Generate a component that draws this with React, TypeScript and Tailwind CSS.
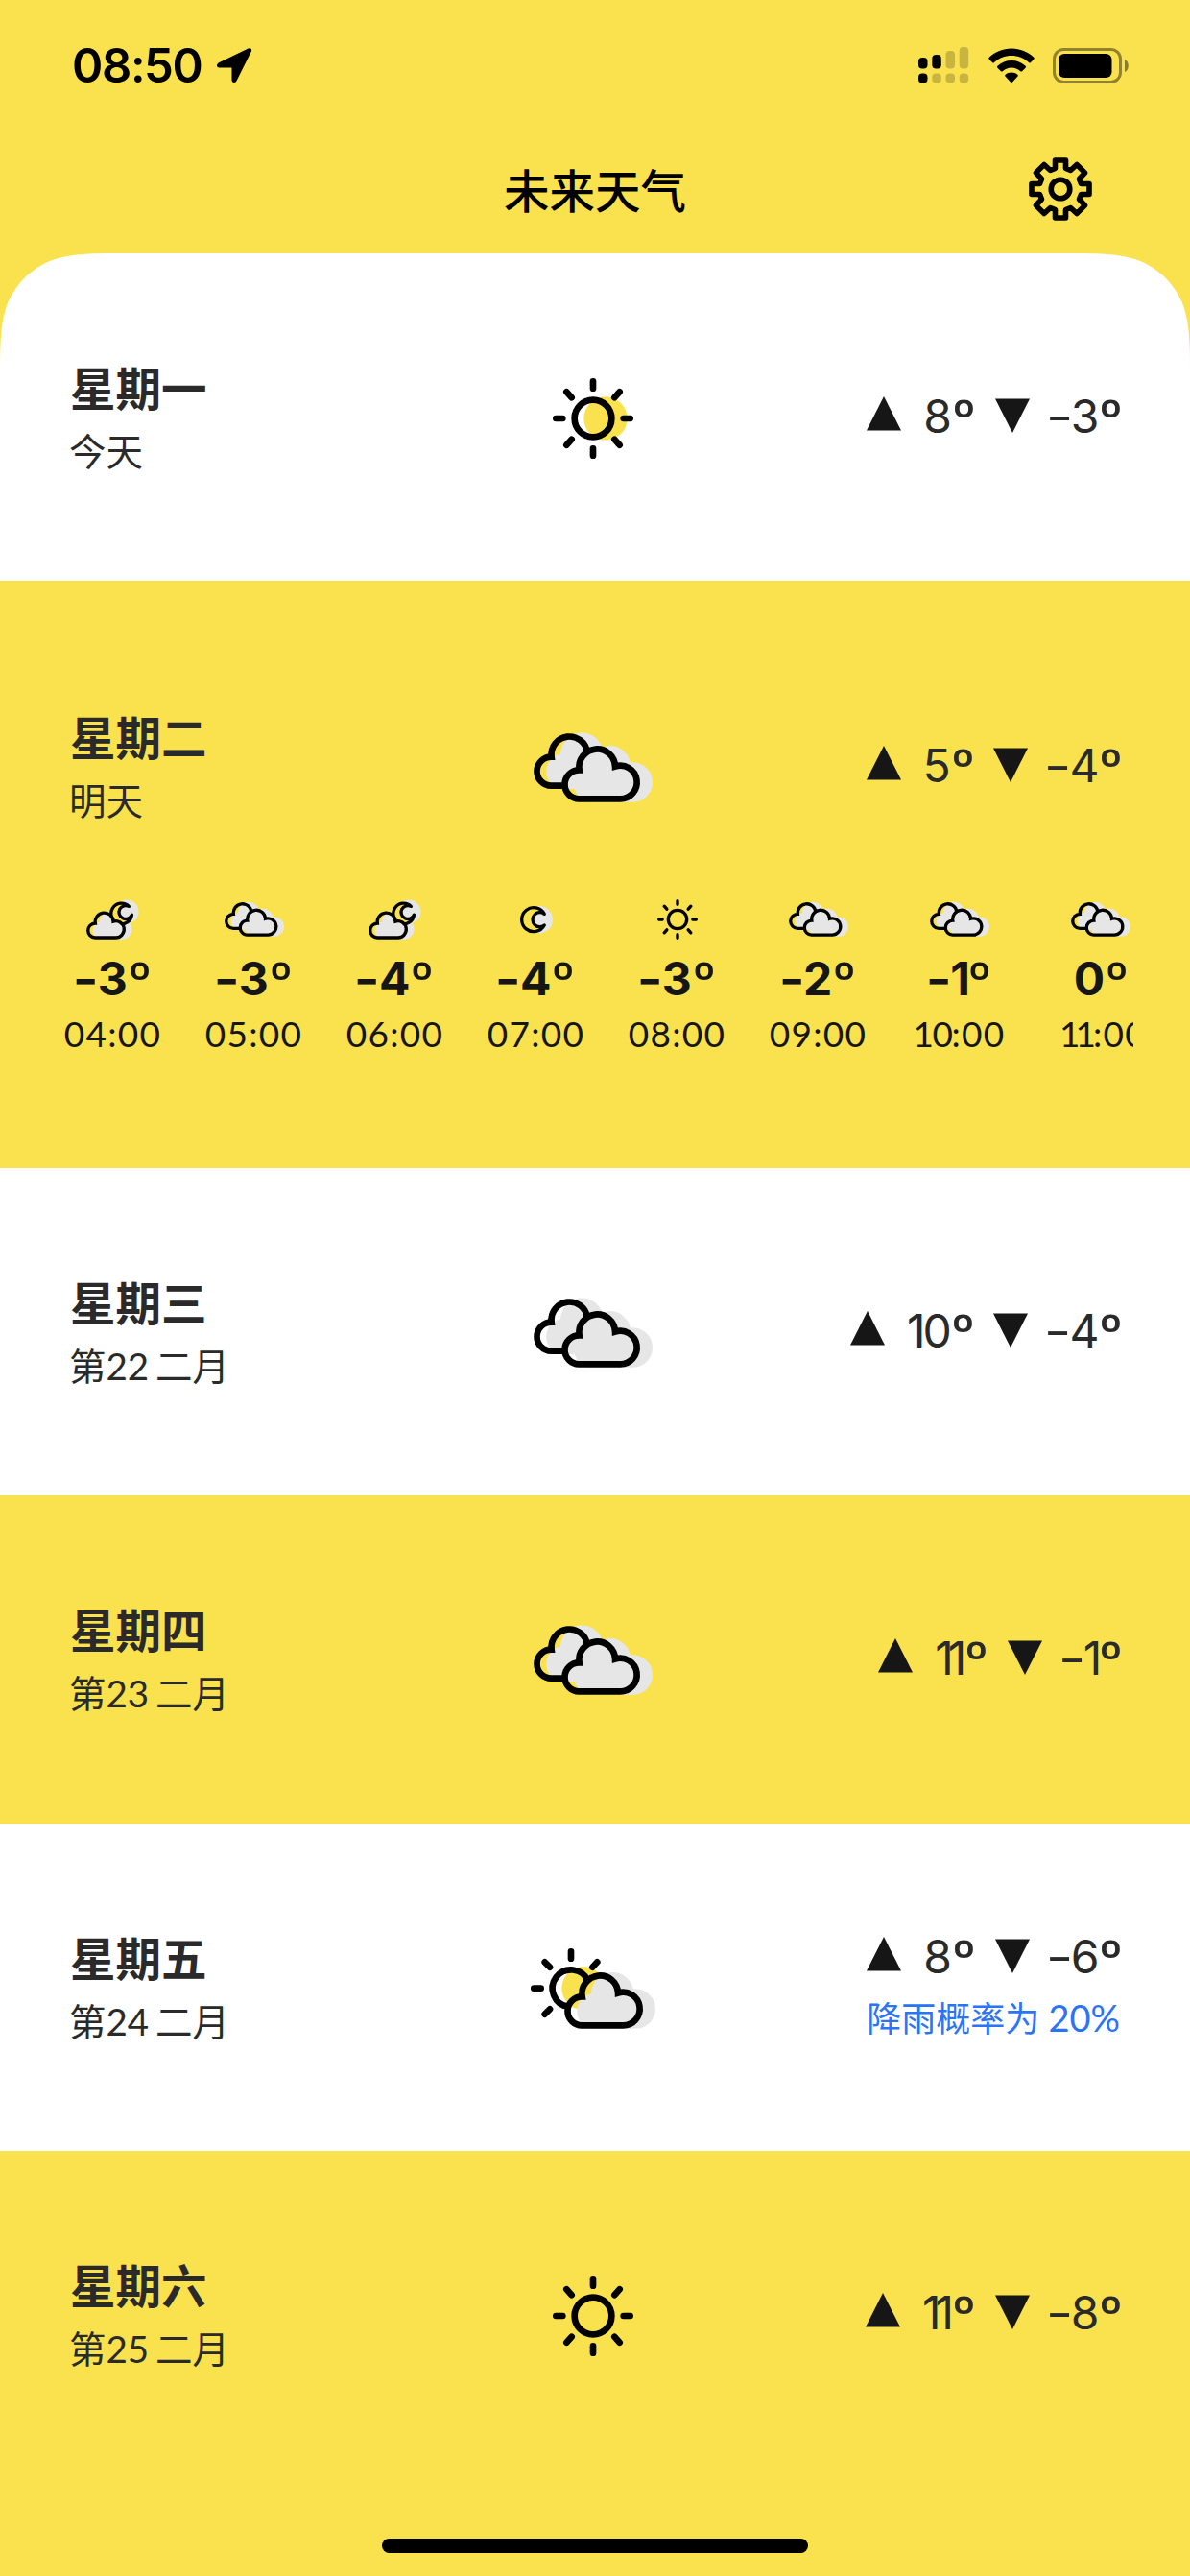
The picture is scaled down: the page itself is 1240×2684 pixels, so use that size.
import { clsx } from "clsx";

type IconName = "sun" | "sunFilled" | "clouds" | "sunCloud" | "moon" | "cloudMoon";

type Day = {
  name: string;
  date: string;
  icon: IconName;
  high: string;
  low: string;
  rain?: string;
  hours?: { icon: IconName; temp: string; time: string }[];
};

const days: Day[] = [
  { name: "星期一", date: "今天", icon: "sunFilled", high: "8", low: "-3" },
  {
    name: "星期二",
    date: "明天",
    icon: "clouds",
    high: "5",
    low: "-4",
    hours: [
      { icon: "cloudMoon", temp: "-3", time: "04:00" },
      { icon: "clouds", temp: "-3", time: "05:00" },
      { icon: "cloudMoon", temp: "-4", time: "06:00" },
      { icon: "moon", temp: "-4", time: "07:00" },
      { icon: "sun", temp: "-3", time: "08:00" },
      { icon: "clouds", temp: "-2", time: "09:00" },
      { icon: "clouds", temp: "-1", time: "10:00" },
      { icon: "clouds", temp: "0", time: "11:00" },
    ],
  },
  { name: "星期三", date: "第22 二月", icon: "clouds", high: "10", low: "-4" },
  { name: "星期四", date: "第23 二月", icon: "clouds", high: "11", low: "-1" },
  { name: "星期五", date: "第24 二月", icon: "sunCloud", high: "8", low: "-6", rain: "20%" },
  { name: "星期六", date: "第25 二月", icon: "sun", high: "11", low: "-8" },
];

const CLOUD = "M55 164A45 45 0 0 1 56 74A56.4 56.4 0 1 1 168 62.5A52 52 0 1 1 183 164Z";
const CLOUD_BEHIND = "M97 164H55A45 45 0 0 1 56 74A56.4 56.4 0 1 1 168 60";
const YELLOW = "#fae24e";
const GRAY = "#e6e6e6";

function CloudShadow() {
  return <path d={CLOUD} transform="translate(39 0)" fill={GRAY} stroke={GRAY} strokeWidth="20" />;
}

function Sun({ filled }: { filled?: boolean }) {
  return (
    <>
      {filled && <circle cx="165" cy="126" r="68" fill={YELLOW} stroke="none" />}
      <circle cx="126" cy="126" r="58" />
      <path
        strokeLinecap="round"
        d="M126 10V32M126 220V242M10 126H31M221 126H242M43 43L59 61M209 43L193 61M43 209L59 191M209 209L193 191"
      />
    </>
  );
}

function Clouds() {
  return (
    <>
      <CloudShadow />
      <g transform="translate(87 41)">
        <CloudShadow />
      </g>
      <path d={CLOUD_BEHIND} />
      <path d={CLOUD} transform="translate(87 41)" />
    </>
  );
}

function SunCloud() {
  return (
    <>
      <circle cx="165" cy="125" r="68" fill={YELLOW} stroke="none" />
      <g transform="translate(105 77)">
        <CloudShadow />
      </g>
      <path d="M117.4 182.4A58 58 0 1 1 179 101.4" />
      <path strokeLinecap="round" d="M126 10V32M10 125H32M44 43L60 59M208 43L193 59M60 190L44 206" />
      <path d={CLOUD} transform="translate(105 77)" />
    </>
  );
}

function Moon() {
  return (
    <>
      <circle cx="119" cy="85" r="85" fill={GRAY} stroke="none" />
      <path
        d="M151.4 50A75 75 0 1 0 151.4 120A45 45 0 1 1 151.4 50Z"
        fill={YELLOW}
        strokeLinejoin="round"
      />
    </>
  );
}

function CloudMoon() {
  return (
    <>
      <clipPath id="cloud-inside">
        <path d={CLOUD} />
      </clipPath>
      <circle cx="252" cy="78" r="75" fill={GRAY} stroke="none" />
      <g transform="translate(0 76)">
        <CloudShadow />
      </g>
      <path
        d="M266 44A65 65 0 1 0 284.5 97.6A42 42 0 1 1 266 44Z"
        fill={YELLOW}
        strokeLinejoin="round"
      />
      <g transform="translate(0 76)">
        <path d={CLOUD} fill={YELLOW} stroke="none" />
        <g clipPath="url(#cloud-inside)">
          <CloudShadow />
        </g>
        <path d={CLOUD} />
      </g>
    </>
  );
}

// All icons share one unit: 3 units to the pixel when large, 6 when small.
const icons = {
  sun: { w: 252, h: 252, art: <Sun /> },
  sunFilled: { w: 252, h: 252, art: <Sun filled /> },
  clouds: { w: 372, h: 216, art: <Clouds /> },
  sunCloud: { w: 388, h: 252, art: <SunCloud /> },
  moon: { w: 204, h: 170, art: <Moon /> },
  cloudMoon: { w: 326, h: 252, art: <CloudMoon /> },
};

function WeatherIcon({ name, small }: { name: IconName; small?: boolean }) {
  const { w, h, art } = icons[name];
  const scale = small ? 6 : 3;
  return (
    <svg
      width={w / scale}
      height={h / scale}
      viewBox={`0 0 ${w} ${h}`}
      className="shrink-0 overflow-visible"
      fill="none"
      stroke="#000"
      strokeWidth="20"
    >
      {art}
    </svg>
  );
}

function StatusBar() {
  return (
    <div className="flex h-[136px] items-center pl-[75px] pr-[63px]">
      <span className="font-['Inter',sans-serif] text-[49px] font-semibold leading-none tracking-[-1.4px] text-black">
        08:50
      </span>
      <svg width="38" height="38" viewBox="0 0 38 38" className="ml-[15px]">
        <path
          d="M34 2.5L3 17.5C1.5 18.5 1.5 20.5 3.5 20.5H17.5V34.5C17.5 36.5 19.5 36.5 20.5 35L36 4C36.5 2.5 35.5 1.8 34 2.5Z"
          stroke="#000"
          strokeWidth="2"
          strokeLinejoin="round"
        />
      </svg>
      <svg width="53" height="38" viewBox="0 0 53 38" className="ml-auto">
        <rect x="0" y="11" width="9.5" height="11.5" rx="4" />
        <rect x="14.3" y="8" width="9.5" height="14.5" rx="4" />
        <rect x="0" y="27.5" width="9.5" height="10" rx="4" />
        <g fillOpacity="0.2">
          <rect x="28.5" y="4" width="9.5" height="18.5" rx="4" />
          <rect x="42.7" y="0" width="9.5" height="22.5" rx="4" />
          <rect x="14.3" y="27.5" width="9.5" height="10" rx="4" />
          <rect x="28.5" y="27.5" width="9.5" height="10" rx="4" />
          <rect x="42.7" y="27.5" width="9.5" height="10" rx="4" />
        </g>
      </svg>
      <svg width="48" height="37" viewBox="0 0 48 37" className="ml-[20px]">
        <path d="M24 0.5C33 0.5 41 4 47 9.5C48 10.5 48 11 47 12L44 15C43 16 42.5 15.5 42 15C37 10.5 31 8 24 8C17 8 11 10.5 6 15C5.5 15.5 5 16 4 15L1 12C0 11 0 10.5 1 9.5C7 4 15 0.5 24 0.5Z" />
        <path d="M24 13C29.5 13 34.5 15 38.3 18.5C39.3 19.5 39.3 20 38.3 21L35.3 24C34.5 24.8 34 24.8 33 24C30.5 21.8 27.5 20.5 24 20.5C20.5 20.5 17.5 21.8 15 24C14 24.8 13.5 24.8 12.7 24L9.7 21C8.7 20 8.7 19.5 9.7 18.5C13.5 15 18.5 13 24 13Z" />
        <path d="M24 25.5C26.5 25.5 28.8 26.4 30.3 27.7C31 28.4 31 29 30.3 29.7L25 35.5C24.3 36.2 23.7 36.2 23 35.5L17.7 29.7C17 29 17 28.4 17.7 27.7C19.2 26.4 21.5 25.5 24 25.5Z" />
      </svg>
      <svg width="80" height="37" viewBox="0 0 80 37" className="ml-[19px]">
        <rect x="1.5" y="1.5" width="69" height="34" rx="10" fill="none" stroke="#000" strokeOpacity="0.42" strokeWidth="3" />
        <rect x="6" y="6" width="55.5" height="25" rx="6" />
        <path d="M75 12C80 13.5 80 23.5 75 25Z" fillOpacity="0.45" />
      </svg>
    </div>
  );
}

function GearIcon() {
  return (
    <svg width="66" height="66" viewBox="-33 -33 66 66" fill="none" stroke="#000" strokeWidth="5.6" strokeLinejoin="round">
      <circle r="9.8" />
      <path d="M-5.5 -30H5.5V-21.5L10.5 -19.5L17 -25.5L25.5 -17L19.5 -10.5L21.5 -5.5H30V5.5H21.5L19.5 10.5L25.5 17L17 25.5L10.5 19.5L5.5 21.5V30H-5.5V21.5L-10.5 19.5L-17 25.5L-25.5 17L-19.5 10.5L-21.5 5.5H-30V-5.5H-21.5L-19.5 -10.5L-25.5 -17L-17 -25.5L-10.5 -19.5L-5.5 -21.5Z" />
    </svg>
  );
}

function Header() {
  return (
    <div className="grid h-[128px] grid-cols-[1fr_auto_1fr] items-center px-[102px] pb-[6px]">
      <h1 className="col-start-2 text-[47.5px] font-medium leading-none text-black">未来天气</h1>
      <div className="justify-self-end">
        <GearIcon />
      </div>
    </div>
  );
}

function Triangle({ down }: { down?: boolean }) {
  return (
    <svg width="36" height="36" viewBox="0 0 36 36" fill="#161616" className={down ? "mb-[2px]" : "mb-[6px]"}>
      <path d={down ? "M0 0.5H36L18 36Z" : "M0 35.5H36L18 0Z"} />
    </svg>
  );
}

function Temp({ value, bold }: { value: string; bold?: boolean }) {
  const digits = value.replace("-", "");
  return (
    <span
      className={clsx(
        "flex font-['Inter',sans-serif] text-[48px] leading-none",
        bold ? "font-bold text-[#161616]" : "font-normal text-[#2a2a2a]"
      )}
    >
      {value.startsWith("-") && (
        <span className={clsx("-translate-x-px", bold ? "scale-x-120" : "scale-x-130")}>-</span>
      )}
      <span
        className={clsx(
          digits === "11" && "tracking-[-6px]",
          digits === "10" && "tracking-[-3px]",
          digits === "1" && "tracking-[-3px]"
        )}
      >
        {digits}
      </span>
      <span
        className={clsx(
          "origin-top-left",
          bold ? "scale-x-110" : "scale-x-115",
          digits === "11" && "ml-[4px]",
          digits === "10" && "ml-[2px]"
        )}
      >
        º
      </span>
    </span>
  );
}

function HourLabel({ time }: { time: string }) {
  const [hour, minute] = time.split(":");
  return (
    <span
      className={clsx(
        "mt-[11px] font-['Lato',sans-serif] text-[37px] leading-[44px] tracking-[1.3px] text-[#161616]",
        hour === "11" && "ml-[6px]"
      )}
    >
      <span
        className={clsx(hour === "11" && "tracking-[-5px]", hour === "10" && "tracking-[-1.5px]")}
      >
        {hour}
      </span>
      <span className={clsx(hour === "11" && "pl-[2px]")}>:{minute}</span>
    </span>
  );
}

function DayRow({ day, index }: { day: Day; index: number }) {
  return (
    <section className={clsx(index % 2 ? "bg-[#fae24e]" : "bg-white", day.hours && "h-[611.75px] pt-[23px]")}>
      <div
        className={clsx(
          "grid grid-cols-[1fr_auto_1fr] items-center pl-[72px] pr-[76px]",
          day.hours ? "h-[309px]" : "h-[341.25px]"
        )}
      >
        <div className={clsx("text-[#2a2a2a]", day.hours ? "pt-[35px]" : "pt-[3px]")}>
          <h2 className="pl-px text-[47.5px] font-bold leading-[66px]">{day.name}</h2>
          <p className="-mb-px pt-px font-['Lato','Noto_Sans_CJK_SC',sans-serif] text-[38.5px] leading-[66px] [word-spacing:-3px]">
            {day.date}
          </p>
        </div>
        <div className={clsx(day.hours ? "pt-[35px]" : "pt-[3px]")}>
          <WeatherIcon name={day.icon} />
        </div>
        <div
          className={clsx(
            "-mr-[3px] flex flex-col items-end",
            day.hours ? "pt-[30px]" : day.rain ? "pt-[6px]" : "pb-[2px]"
          )}
        >
          <div className="flex items-center">
            <Triangle />
            <span className="w-[23px]" />
            <Temp value={day.high} />
            <span className="w-[23px]" />
            <Triangle down />
            <span className="w-[21px]" />
            <Temp value={day.low} />
          </div>
          {day.rain && (
            <p className="-mb-[4px] pt-[6px] font-['Lato','Noto_Sans_CJK_SC',sans-serif] text-[36px] leading-[66px] text-[#2b74f6]">
              降雨概率为 <span className="text-[38px]">{day.rain}</span>
            </p>
          )}
        </div>
      </div>
      {day.hours && (
        <div className="mx-[59px] flex gap-[30px] overflow-hidden">
          {day.hours.map((hour) => (
            <div key={hour.time} className="flex w-[117px] shrink-0 flex-col items-center">
              <div className="flex h-[42px] items-center">
                <WeatherIcon name={hour.icon} small />
              </div>
              <div className="mt-[17px]">
                <Temp value={hour.temp} bold />
              </div>
              <HourLabel time={hour.time} />
            </div>
          ))}
        </div>
      )}
    </section>
  );
}

export default function App() {
  return (
    <div className="relative h-[2684px] w-[1240px] overflow-hidden bg-[#fae24e] font-['Noto_Sans_CJK_SC',sans-serif]">
      <StatusBar />
      <Header />
      <main className="[clip-path:path('M0_134.5C0_95.8_0_76.4_6.6_55.6C14.9_32.8_32.8_14.9_55.6_6.6C76.4_0_95.8_0_134.5_0H1105.5C1144.2_0_1163.6_0_1184.4_6.6C1207.2_14.9_1225.1_32.8_1233.4_55.6C1240_76.4_1240_95.8_1240_134.5V2500H0Z')]">
        {days.map((day, i) => (
          <DayRow key={day.name} day={day} index={i} />
        ))}
      </main>
      <div className="absolute bottom-[24px] left-[398px] h-[15px] w-[444px] rounded-full bg-black" />
    </div>
  );
}
